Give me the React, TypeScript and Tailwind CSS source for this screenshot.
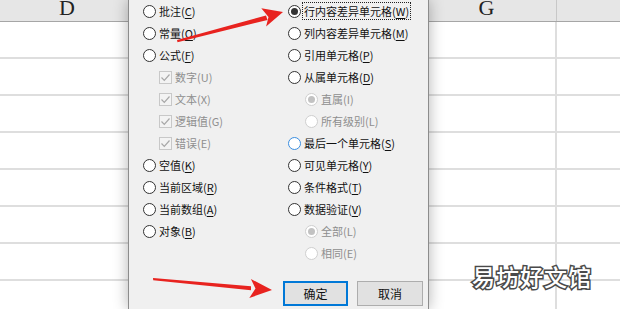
import React from "react";

type Item = {
  kind: "radio" | "check" | "sub";
  label: string;
  k: string;
  checked?: boolean;
  disabled?: boolean;
  focus?: boolean;
  hover?: boolean;
  ul?: boolean;
};

const leftItems: Item[] = [
  { kind: "radio", label: "批注", k: "C", ul: true },
  { kind: "radio", label: "常量", k: "O", ul: true },
  { kind: "radio", label: "公式", k: "F", ul: true },
  { kind: "check", label: "数字", k: "U", checked: true, disabled: true },
  { kind: "check", label: "文本", k: "X", checked: true, disabled: true },
  { kind: "check", label: "逻辑值", k: "G", checked: true, disabled: true },
  { kind: "check", label: "错误", k: "E", checked: true, disabled: true },
  { kind: "radio", label: "空值", k: "K", ul: true },
  { kind: "radio", label: "当前区域", k: "R", ul: true },
  { kind: "radio", label: "当前数组", k: "A", ul: true },
  { kind: "radio", label: "对象", k: "B", ul: true },
];

const rightItems: Item[] = [
  { kind: "radio", label: "行内容差异单元格", k: "W", checked: true, focus: true, ul: true },
  { kind: "radio", label: "列内容差异单元格", k: "M", ul: true },
  { kind: "radio", label: "引用单元格", k: "P", ul: true },
  { kind: "radio", label: "从属单元格", k: "D", ul: true },
  { kind: "sub", label: "直属", k: "I", checked: true, disabled: true },
  { kind: "sub", label: "所有级别", k: "L", disabled: true },
  { kind: "radio", label: "最后一个单元格", k: "S", hover: true, ul: true },
  { kind: "radio", label: "可见单元格", k: "Y", ul: true },
  { kind: "radio", label: "条件格式", k: "T", ul: true },
  { kind: "radio", label: "数据验证", k: "V", ul: true },
  { kind: "sub", label: "全部", k: "L", checked: true, disabled: true },
  { kind: "sub", label: "相同", k: "E", disabled: true },
];

function Radio({ it }: { it: Item }) {
  const border = it.disabled
    ? "border-[#cfcfcf]"
    : it.hover
    ? "border-[#3a8ee0]"
    : "border-[#333333]";
  return (
    <span
      className={`w-[13px] h-[13px] rounded-full border ${border} bg-white flex items-center justify-center shrink-0`}
    >
      {it.checked ? (
        <span
          className={`w-[7px] h-[7px] rounded-full ${
            it.disabled ? "bg-[#c2c2c2]" : "bg-[#333333]"
          }`}
        />
      ) : null}
    </span>
  );
}

function Check() {
  return (
    <span className="w-[13px] h-[13px] border border-[#c8c8c8] bg-[#f3f3f3] flex items-center justify-center shrink-0">
      <svg width="11" height="11" viewBox="0 0 11 11">
        <polyline
          points="1.5,5.5 4.3,8.3 9.5,2.5"
          fill="none"
          stroke="#a8a8a8"
          strokeWidth="1.2"
        />
      </svg>
    </span>
  );
}

function Row({ it }: { it: Item }) {
  const color = it.disabled ? "text-[#8e8e8e]" : "text-[#111111]";
  const text = (
    <span
      className={`${color} whitespace-nowrap leading-[14px] ${
        it.focus ? "outline outline-1 outline-dotted outline-[#222] outline-offset-[1px]" : ""
      }`}
    >
      {it.label}(
      <span className={it.ul ? "underline underline-offset-[2px]" : ""}>{it.k}</span>)
    </span>
  );
  return (
    <div className="h-[22px] flex items-center">
      {it.kind === "check" ? (
        <>
          <span className="w-[16px] shrink-0" />
          <Check />
          <span className="w-[3px] shrink-0" />
        </>
      ) : it.kind === "sub" ? (
        <>
          <span className="w-[17px] shrink-0" />
          <Radio it={it} />
          <span className="w-[3px] shrink-0" />
        </>
      ) : (
        <>
          <Radio it={it} />
          <span className="w-[3px] shrink-0" />
        </>
      )}
      {text}
    </div>
  );
}

function Sheet() {
  const rows = Array.from({ length: 8 });
  return (
    <div className="w-[620px] h-[309px] bg-white flex flex-col">
      <div className="h-[22px] shrink-0 flex bg-[#e6e6e6] border-b border-[#a6a6a6] font-['Liberation_Serif',serif] text-[22px] text-[#222] leading-none">
        <div className="w-[134px] flex justify-center items-end pb-[2px]">D</div>
        <div className="w-[283px]" />
        <div className="w-[140px] flex justify-center items-end pb-[2px] border-r border-[#c8c8c8]">G</div>
        <div className="flex-1" />
      </div>
      {rows.map((_, i) => (
        <div key={i} className="h-[37px] shrink-0 flex border-b-2 border-[#dedede]">
          <div className="w-[417px]" />
          <div className="w-[140px] border-r-2 border-[#dedede]" />
          <div className="flex-1" />
        </div>
      ))}
    </div>
  );
}

export default function App() {
  return (
    <div className="relative w-[620px] h-[309px] overflow-hidden bg-white font-['Noto_Sans_CJK_SC','Noto_Sans',sans-serif] text-[11px]">
      <Sheet />

      {/* Dialog */}
      <div className="absolute left-[128px] top-0 w-[301px] h-[309px] bg-[#f0f0f0] border-l border-r border-[#8c8c8c] shadow-[0_0_14px_rgba(0,0,0,0.3)] flex flex-col">
        <div className="flex">
          <div className="w-[145px] pl-[14px] flex flex-col">
            {leftItems.map((it, i) => (
              <Row key={i} it={it} />
            ))}
          </div>
          <div className="flex-1 pl-[14px] flex flex-col">
            {rightItems.map((it, i) => (
              <Row key={i} it={it} />
            ))}
          </div>
        </div>
        <div className="mt-[17px] pl-[154px] flex gap-[9px]">
          <div className="w-[65px] h-[25px] bg-[#e1e1e1] border-2 border-[#0078d7] flex items-center justify-center text-[12px] text-[#111]">
            确定
          </div>
          <div className="w-[66px] h-[25px] bg-[#e1e1e1] border border-[#adadad] flex items-center justify-center text-[12px] text-[#111]">
            取消
          </div>
        </div>
      </div>

      {/* Arrows */}
      <svg className="absolute left-0 top-0 pointer-events-none" width="620" height="309" viewBox="0 0 620 309">
        <polygon points="177,40 266,15.5 267.5,20 177.5,42.2" fill="#e8231f" />
        <polygon points="283,12 261.3,8.2 268.5,17 266.1,26.5" fill="#e8231f" />
        <polygon points="153,278 251,286.2 251,290.2 153.2,280.2" fill="#e8231f" />
        <polygon points="272,290 250.9,279 255.5,288.4 249.3,298" fill="#e8231f" />
      </svg>

      {/* Watermark */}
      <div className="absolute left-[472px] top-[262px] text-[23px] leading-[28px] text-white font-medium tracking-[1px] [-webkit-text-stroke:3px_#4a4a4a] [paint-order:stroke_fill]">
        易坊好文馆
      </div>
    </div>
  );
}
